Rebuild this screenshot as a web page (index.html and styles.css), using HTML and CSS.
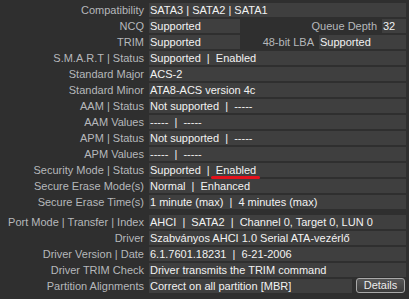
FILE: index.html
```html
<!DOCTYPE html>
<html lang="en">
<head>
    <meta charset="UTF-8">
    <meta name="viewport" content="width=device-width, initial-scale=1.0">
    <title>Disk Info</title>
    <link rel="stylesheet" href="styles.css">
</head>
<body>

    <div class="info">
        <div class="row">
            <div class="label">Compatibility</div>
            <div class="val">SATA3 | SATA2 | SATA1</div>
        </div>
        <div class="row">
            <div class="label">NCQ</div>
            <div class="val short">Supported</div>
            <div class="sublabel">Queue Depth</div>
            <div class="val tiny">32</div>
        </div>
        <div class="row">
            <div class="label">TRIM</div>
            <div class="val short">Supported</div>
            <div class="sublabel">48-bit LBA</div>
            <div class="val mid">Supported</div>
        </div>
        <div class="row">
            <div class="label">S.M.A.R.T | Status</div>
            <div class="val">Supported &nbsp;| &nbsp;Enabled</div>
        </div>
        <div class="row">
            <div class="label">Standard Major</div>
            <div class="val">ACS-2</div>
        </div>
        <div class="row">
            <div class="label">Standard Minor</div>
            <div class="val">ATA8-ACS version 4c</div>
        </div>
        <div class="row">
            <div class="label">AAM | Status</div>
            <div class="val">Not supported &nbsp;| &nbsp;-----</div>
        </div>
        <div class="row">
            <div class="label">AAM Values</div>
            <div class="val">----- &nbsp;| &nbsp;-----</div>
        </div>
        <div class="row">
            <div class="label">APM | Status</div>
            <div class="val">Not supported &nbsp;| &nbsp;-----</div>
        </div>
        <div class="row">
            <div class="label">APM Values</div>
            <div class="val">----- &nbsp;| &nbsp;-----</div>
        </div>
        <div class="row">
            <div class="label">Security Mode | Status</div>
            <div class="val">Supported &nbsp;| &nbsp;<span class="marked">Enabled</span></div>
        </div>
        <div class="row">
            <div class="label">Secure Erase Mode(s)</div>
            <div class="val">Normal &nbsp;| &nbsp;Enhanced</div>
        </div>
        <div class="row">
            <div class="label">Secure Erase Time(s)</div>
            <div class="val">1 minute (max) &nbsp;| &nbsp;4 minutes (max)</div>
        </div>

        <!-- driver block -->
        <div class="row gap">
            <div class="label">Port Mode | Transfer | Index</div>
            <div class="val">AHCI &nbsp;| &nbsp;SATA2 &nbsp;| &nbsp;Channel 0, Target 0, LUN 0</div>
        </div>
        <div class="row">
            <div class="label">Driver</div>
            <div class="val">Szabványos AHCI 1.0 Serial ATA-vezérlő</div>
        </div>
        <div class="row">
            <div class="label">Driver Version | Date</div>
            <div class="val">6.1.7601.18231 &nbsp;| &nbsp;6-21-2006</div>
        </div>
        <div class="row">
            <div class="label">Driver TRIM Check</div>
            <div class="val">Driver transmits the TRIM command</div>
        </div>
        <div class="row">
            <div class="label">Partition Alignments</div>
            <div class="val">Correct on all partition [MBR]</div>
            <button class="details">Details</button>
        </div>
    </div>

</body>
</html>
```

FILE: styles.css
```css
body {
    margin: 0;
    padding: 3px 3px 0 0;
    background-color: #2f2f2f;
    font-family: "Liberation Sans", Arial, sans-serif;
    font-size: 11px;
}

.row {
    display: flex;
    height: 14px;
    margin-bottom: 2px;
    line-height: 14px;
    white-space: nowrap;
}

.row.gap {
    margin-top: 6px;
}

.label {
    width: 149px;
    flex: none;
    box-sizing: border-box;
    padding-right: 5px;
    text-align: right;
    color: #b6b8bb;
}

.val {
    flex: 1;
    background-color: #3f3f3f;
    color: #f2f2f2;
    padding-left: 1px;
}

.val.short {
    flex: none;
    width: 90px;
}

.val.tiny {
    flex: none;
    width: 23px;
}

.val.mid {
    flex: none;
    width: 86px;
}

.sublabel {
    flex: 1;
    text-align: right;
    padding-right: 5px;
    color: #b6b8bb;
}

/* red marker under Enabled */
.marked {
    position: relative;
}

.marked::after {
    content: "";
    position: absolute;
    left: -5px;
    right: -4px;
    bottom: -3px;
    height: 3px;
    border-radius: 2px;
    background-color: #e3111c;
}

.details {
    flex: none;
    width: 49px;
    height: 15px;
    margin: -1px 1px 0 4px;
    padding: 0;
    border: 1px solid #a9a9a9;
    border-radius: 3px;
    background: linear-gradient(#575757, #3b3b3b);
    color: #ececec;
    font-family: "Liberation Sans", Arial, sans-serif;
    font-size: 11px;
    line-height: 13px;
}
```
